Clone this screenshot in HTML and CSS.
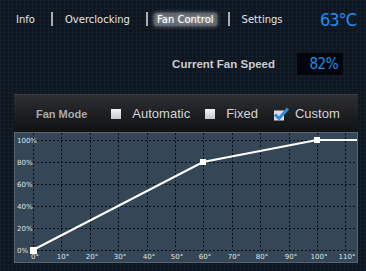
FILE: index.html
```html
<!DOCTYPE html>
<html lang="en">
<head>
    <meta charset="UTF-8">
    <meta name="viewport" content="width=device-width, initial-scale=1.0">
    <title>Fan Control</title>
    <link rel="stylesheet" href="styles.css">
</head>
<body>
    <div class="app">
        <nav class="topnav">
            <a class="nav-item">Info</a>
            <span class="sep"></span>
            <a class="nav-item">Overclocking</a>
            <span class="sep"></span>
            <a class="nav-item active">Fan Control</a>
            <span class="sep"></span>
            <a class="nav-item">Settings</a>
            <span class="temp">63°C</span>
        </nav>

        <div class="speed-row">
            <span class="speed-label">Current Fan Speed</span>
            <span class="speed-value">82%</span>
        </div>

        <div class="panel">
            <div class="panel-head">
                <span class="mode-label">Fan Mode</span>
                <label class="option"><span class="box"></span>Automatic</label>
                <label class="option"><span class="box"></span>Fixed</label>
                <label class="option checked">
                    <svg class="check" width="16" height="14" viewBox="0 0 16 14">
                        <rect x="1" y="3.5" width="10" height="10" fill="#dcdce4"/>
                        <path d="M2 7.5 L6 11.5 L15 1.5" fill="none" stroke="#2b8be0" stroke-width="3" stroke-linejoin="round"/>
                    </svg>Custom
                </label>
            </div>

            <div class="chart">
                <svg width="342" height="129" viewBox="0 0 342 129">
                    <g class="grid">
                        <line x1="18.5" y1="0" x2="18.5" y2="117"/>
                        <line x1="46.5" y1="0" x2="46.5" y2="117"/>
                        <line x1="75.5" y1="0" x2="75.5" y2="117"/>
                        <line x1="103.5" y1="0" x2="103.5" y2="117"/>
                        <line x1="132.5" y1="0" x2="132.5" y2="117"/>
                        <line x1="160.5" y1="0" x2="160.5" y2="117"/>
                        <line x1="188.5" y1="0" x2="188.5" y2="117"/>
                        <line x1="217.5" y1="0" x2="217.5" y2="117"/>
                        <line x1="245.5" y1="0" x2="245.5" y2="117"/>
                        <line x1="274.5" y1="0" x2="274.5" y2="117"/>
                        <line x1="302.5" y1="0" x2="302.5" y2="117"/>
                        <line x1="330.5" y1="0" x2="330.5" y2="117"/>
                        <line x1="18" y1="7.5" x2="342" y2="7.5"/>
                        <line x1="18" y1="29.5" x2="342" y2="29.5"/>
                        <line x1="18" y1="51.5" x2="342" y2="51.5"/>
                        <line x1="18" y1="73.5" x2="342" y2="73.5"/>
                        <line x1="18" y1="95.5" x2="342" y2="95.5"/>
                        <line x1="18" y1="117.5" x2="342" y2="117.5"/>
                    </g>
                    <g class="ylabels">
                        <text x="2" y="10">100%</text>
                        <text x="2" y="32">80%</text>
                        <text x="2" y="54">60%</text>
                        <text x="2" y="76">40%</text>
                        <text x="2" y="98">20%</text>
                        <text x="2" y="120">0%</text>
                    </g>
                    <g class="xlabels">
                        <text x="20" y="126">0°</text>
                        <text x="48" y="126">10°</text>
                        <text x="77" y="126">20°</text>
                        <text x="105" y="126">30°</text>
                        <text x="134" y="126">40°</text>
                        <text x="162" y="126">50°</text>
                        <text x="190" y="126">60°</text>
                        <text x="219" y="126">70°</text>
                        <text x="247" y="126">80°</text>
                        <text x="276" y="126">90°</text>
                        <text x="304" y="126">100°</text>
                        <text x="332" y="126">110°</text>
                    </g>
                    <polyline class="curve" points="18,117 188,29 302,7 342,7"/>
                    <rect class="point" x="15" y="114" width="7" height="7"/>
                    <rect class="point" x="185" y="26" width="6" height="6"/>
                    <rect class="point" x="299" y="4" width="6" height="6"/>
                </svg>
            </div>
        </div>
    </div>
</body>
</html>
```

FILE: styles.css
```css
body {
    margin: 0;
    background-color: #0c1620;
    font-family: "Liberation Sans", Arial, sans-serif;
}
.app {
    width: 366px;
    height: 271px;
    overflow: hidden;
    background-color: #0d1721;
    background-image:
        linear-gradient(rgba(255,255,255,0.025) 1px, transparent 1px),
        linear-gradient(90deg, rgba(255,255,255,0.025) 1px, transparent 1px);
    background-size: 4px 4px;
}
.topnav {
    display: flex;
    align-items: center;
    height: 20px;
    margin-top: 9px;
    padding: 0 10px 0 16px;
}
.nav-item {
    color: #e4e6e8;
    font-family: "DejaVu Sans", sans-serif;
    font-size: 10px;
}
.nav-item.active {
    color: #fff;
    padding: 1px 3px;
    margin: 0 -5px 0 -6px;
    background: rgba(190,195,200,0.45);
    border-radius: 2px;
    box-shadow: 0 0 4px rgba(210,215,220,0.6);
    text-shadow: 0 0 3px rgba(255,255,255,0.8);
}
.sep {
    width: 2px;
    height: 14px;
    background: #a8aeb4;
    margin: 0 12px 0 16px;
}
.temp {
    margin-left: auto;
    color: #1f8ff2;
    font-family: "DejaVu Sans Condensed", "DejaVu Sans", sans-serif;
    font-size: 18px;
    letter-spacing: -1px;
}
.speed-row {
    display: flex;
    justify-content: flex-end;
    align-items: center;
    margin-top: 24px;
    padding-right: 23px;
}
.speed-label {
    color: #c9cdd1;
    font-size: 11.5px;
    font-weight: bold;
    margin-right: 22px;
}
.speed-value {
    width: 46px;
    height: 22px;
    box-sizing: border-box;
    padding-right: 5px;
    background: #02060a;
    color: #1f8ff2;
    font-family: "DejaVu Sans Condensed", "DejaVu Sans", sans-serif;
    font-size: 15px;
    letter-spacing: -0.5px;
    line-height: 22px;
    text-align: right;
}
.panel {
    margin: 19px 8px 0 14px;
}
.panel-head {
    display: flex;
    align-items: center;
    height: 37px;
    padding-left: 22px;
    border-top: 1px solid #3c3f43;
    background: linear-gradient(#2c2e31, #101113);
}
.mode-label {
    color: #a9abad;
    font-size: 11px;
    font-weight: bold;
    margin-right: 24px;
}
.option {
    display: flex;
    align-items: center;
    color: #d4d6d8;
    font-size: 13px;
    margin-right: 15px;
}
.box {
    width: 10px;
    height: 10px;
    margin-right: 11px;
    background: linear-gradient(#f2f2f7, #c6c6d0);
}
.check {
    margin-right: 6px;
}
.chart {
    border: 1px solid #5a6571;
    background: #354757;
}
.chart svg {
    display: block;
}
.grid line {
    stroke: #0b1016;
    stroke-width: 1;
    stroke-dasharray: 2 2;
}
.ylabels text,
.xlabels text {
    fill: #dfe3e7;
    font-family: "DejaVu Sans", sans-serif;
    font-size: 7px;
}
.xlabels text {
    text-anchor: middle;
}
.curve {
    fill: none;
    stroke: #ffffff;
    stroke-width: 2;
}
.point {
    fill: #ffffff;
}
```
